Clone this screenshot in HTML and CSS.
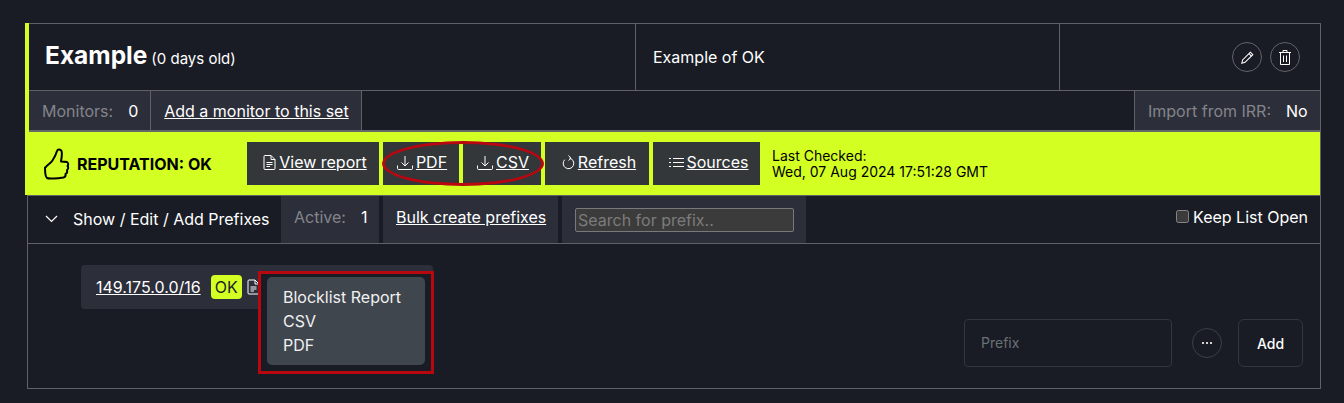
FILE: index.html
```html
<!DOCTYPE html>
<html lang="en">
<head>
    <meta charset="UTF-8">
    <meta name="viewport" content="width=device-width, initial-scale=1.0">
    <title>Example</title>
    <link rel="stylesheet" href="styles.css">
</head>
<body>
    <div class="set">
        <div class="set-head">
            <!-- Name, description, actions -->
            <div class="title-row">
                <div class="title-cell"><span class="set-name">Example</span> <span class="set-age">(0 days old)</span></div>
                <div class="desc-cell">Example of OK</div>
                <div class="actions-cell">
                    <button class="round-btn" type="button" aria-label="Edit">
                        <svg width="13" height="13" viewBox="0 0 16 16" fill="none" stroke="currentColor" stroke-width="1.300"><path d="M11.500 1.500l3 3-9.500 9.500-4 1 1-4z"/><path d="M9.800 3.200l3 3"/></svg>
                    </button>
                    <button class="round-btn" type="button" aria-label="Delete">
                        <svg width="12" height="15" viewBox="0 0 12 15" fill="none" stroke="currentColor"><path d="M0 2.500h12M4 2V.5h4V2M1.500 3v11.500h9V3M4.500 5.500v6.500M7.500 5.500v6.500"/></svg>
                    </button>
                </div>
            </div>

            <!-- Monitors -->
            <div class="info-row">
                <div class="info-cell"><span class="muted">Monitors:</span><span class="count">0</span></div>
                <div class="info-cell add-monitor"><a href="#">Add a monitor to this set</a></div>
                <div class="info-cell import-cell"><span class="muted">Import from IRR:</span><span class="count">No</span></div>
            </div>

            <!-- Reputation bar -->
            <div class="rep-bar">
                <svg class="thumb" width="26" height="32" viewBox="0 0 26 32" fill="none" stroke="#000" stroke-width="2" stroke-linejoin="round" stroke-linecap="round"><path d="M1.500 19.500c2-3 5-4 7-7 2-3 3.500-6 4.500-9.500.5-2 3.500-2 4.500 0 1 2.500 0 7-.5 10.500 2 0 4.500 0 6 .5 1.500 1 1.500 3 .5 4 1 1 1 3-.5 4 .5 1.500 0 3.500-1.500 4 .5 2-.5 3-2 3.500-3 .5-6 1-9.500 1-3 0-5 .5-7-.5-2-1.500-2-6-2-10.500z"/></svg>
                <span class="rep-label">REPUTATION: OK</span>
                <div class="rep-btns">
                    <a class="rep-btn btn-view" href="#"><svg width="13" height="15" viewBox="0 0 13 15" fill="none" stroke="currentColor"><path d="M1 1.500q0-1 1-1h6l4 4v9q0 1-1 1H2q-1 0-1-1zM8 .5v4h4M3.500 7.500h6M3.500 9.500h6M3.500 11.500h3.500"/></svg><span>View report</span></a>
                    <a class="rep-btn btn-pdf" href="#"><svg width="16" height="15" viewBox="0 0 16 15" fill="none" stroke="currentColor"><path d="M8 1v10M4.500 7.500L8 11l3.500-3.500M.5 10.500v3q0 1 1 1h13q1 0 1-1v-3"/></svg><span>PDF</span></a>
                    <a class="rep-btn btn-csv" href="#"><svg width="16" height="15" viewBox="0 0 16 15" fill="none" stroke="currentColor"><path d="M8 1v10M4.500 7.500L8 11l3.500-3.500M.5 10.500v3q0 1 1 1h13q1 0 1-1v-3"/></svg><span>CSV</span></a>
                    <a class="rep-btn btn-refresh" href="#"><svg width="13" height="15" viewBox="0 0 13 15" fill="none" stroke="currentColor"><path d="M7.500 3.200a5.300 5.300 0 1 1-4.800 1.500"/><path d="M6.500.5l2.500 2.700-2.500 2.300" stroke-width="1"/></svg><span>Refresh</span></a>
                    <a class="rep-btn btn-sources" href="#"><svg width="15" height="11" viewBox="0 0 15 11" fill="none" stroke="currentColor"><path d="M4 1.500h11M4 5.500h11M4 9.500h11M0 1.500h2M0 5.500h2M0 9.500h2"/></svg><span>Sources</span></a>
                </div>
                <div class="last-checked">Last Checked:<br>Wed, 07 Aug 2024 17:51:28 GMT</div>
                <div class="ring"></div>
            </div>
        </div>

        <!-- Prefix toolbar -->
        <div class="prefix-bar">
            <div class="toggle">
                <svg width="13" height="8" viewBox="0 0 13 8" fill="none" stroke="currentColor" stroke-width="1.200"><path d="M1 1l5.500 5.500L12 1"/></svg>
                <span>Show / Edit / Add Prefixes</span>
            </div>
            <div class="tool-cell active-cell"><span class="muted">Active:</span><span class="count">1</span></div>
            <div class="tool-cell bulk-cell"><a href="#">Bulk create prefixes</a></div>
            <div class="tool-cell search-cell"><input class="search" type="text" placeholder="Search for prefix.."></div>
            <label class="keep-open"><input type="checkbox"> Keep List Open</label>
        </div>

        <!-- Prefix list and add form -->
        <div class="prefix-body">
            <div class="chip">
                <a href="#">149.175.0.0/16</a>
                <span class="ok-tag">OK</span>
                <svg width="13" height="16" viewBox="0 0 13 15" fill="none" stroke="currentColor"><path d="M1 1.500q0-1 1-1h6l4 4v9q0 1-1 1H2q-1 0-1-1zM8 .5v4h4M3.500 7.500h6M3.500 9.500h6M3.500 11.500h3.500"/></svg>
                <div class="annot-box">
                    <ul class="menu">
                        <li>Blocklist Report</li>
                        <li>CSV</li>
                        <li>PDF</li>
                    </ul>
                </div>
            </div>
            <form class="add-form">
                <input class="prefix-input" type="text" placeholder="Prefix">
                <button class="round-btn more-btn" type="button" aria-label="More">
                    <svg width="12" height="4" viewBox="0 0 12 4" fill="currentColor"><circle cx="2" cy="2" r="1.100"/><circle cx="6" cy="2" r="1.100"/><circle cx="10" cy="2" r="1.100"/></svg>
                </button>
                <button class="add-btn" type="button">Add</button>
            </form>
        </div>
    </div>
</body>
</html>
```

FILE: styles.css
```css
/* General Styles */
body {
    margin: 0;
    background-color: #191c24;
    color: #fff;
    font-family: Inter, "Liberation Sans", sans-serif;
    font-size: 16px;
    height: 403px;
    overflow: hidden;
}
a {
    color: inherit;
}
.set {
    box-sizing: border-box;
    width: 1294px;
    height: 366px;
    margin: 23px 0 0 27px;
    border: 1px solid #5f6167;
    display: flex;
    flex-direction: column;
}
.set-head {
    margin: -1px 0 0 -3px;
    border-left: 4px solid #d4ff23;
}
.muted {
    color: #83858b;
}
.count {
    margin-left: 15px;
}

/* Title row */
.title-row {
    display: flex;
    height: 66px;
    border-top: 1px solid #5f6167;
}
.title-cell {
    box-sizing: border-box;
    width: 606px;
    padding: 16px 0 0 16px;
    display: flex;
    align-items: baseline;
    gap: 4px;
}
.set-name {
    font-size: 24.5px;
    font-weight: 700;
}
.set-age {
    font-size: 15px;
}
.desc-cell {
    box-sizing: border-box;
    width: 424px;
    padding-left: 17px;
    border-left: 1px solid #5f6167;
    display: flex;
    align-items: center;
}
.actions-cell {
    flex: 1;
    border-left: 1px solid #5f6167;
    display: flex;
    align-items: center;
    justify-content: flex-end;
    gap: 8px;
    padding-right: 20px;
}
.round-btn {
    box-sizing: border-box;
    width: 30px;
    height: 30px;
    padding: 0;
    border: 1px solid #62646a;
    border-radius: 50%;
    background: none;
    color: #fff;
    display: flex;
    align-items: center;
    justify-content: center;
}

/* Monitors row */
.info-row {
    display: flex;
    height: 39px;
    border-top: 1px solid #5f6167;
    border-bottom: 2px solid #66686c;
}
.info-cell {
    box-sizing: border-box;
    background-color: #2c2e3a;
    border-right: 1px solid #5f6167;
    padding: 0 12px 0 13px;
    display: flex;
    align-items: center;
    white-space: nowrap;
}
.import-cell {
    margin-left: auto;
    border-right: none;
    border-left: 1px solid #5f6167;
    width: 186px;
}

/* Reputation bar */
.rep-bar {
    position: relative;
    height: 63px;
    background-color: #d4ff23;
    color: #000;
    display: flex;
    align-items: center;
    padding-left: 15px;
}
.rep-label {
    font-weight: 700;
    font-size: 16px;
    margin-left: 7px;
    width: 170px;
    white-space: nowrap;
}
.rep-btns {
    display: flex;
    gap: 4px;
}
.rep-btn {
    box-sizing: border-box;
    height: 43px;
    padding: 0 0 3px 4px;
    background-color: #33373a;
    color: #fff;
    display: flex;
    align-items: center;
    justify-content: center;
    gap: 3px;
    text-decoration: none;
}
.rep-btn span {
    text-decoration: underline;
}
.btn-view { width: 132px; }
.btn-pdf { width: 76px; padding-left: 2px; }
.btn-csv { width: 78px; padding-left: 2px; }
.btn-refresh { width: 104px; }
.btn-sources { width: 107px; }
.last-checked {
    margin-left: 12px;
    font-size: 14px;
    line-height: 16px;
}
.ring {
    position: absolute;
    left: 353px;
    top: 9px;
    width: 162px;
    height: 45px;
    box-sizing: border-box;
    border: 3px solid #b9070f;
    border-radius: 50%;
}

/* Prefix toolbar */
.prefix-bar {
    display: flex;
    height: 49px;
    border-top: 1px solid #5f6167;
    border-bottom: 1px solid #5f6167;
    box-sizing: border-box;
}
.toggle {
    box-sizing: border-box;
    width: 253px;
    padding: 0 0 2px 17px;
    display: flex;
    align-items: center;
    gap: 15px;
}
.tool-cell {
    background-color: #2c2e3a;
    display: flex;
    align-items: center;
    padding-bottom: 6px;
    box-sizing: border-box;
    margin-right: 4px;
}
.active-cell {
    width: 98px;
    padding-left: 13px;
}
.bulk-cell {
    width: 175px;
    padding-left: 13px;
}
.search-cell {
    width: 244px;
    padding: 0 12px 0 13px;
}
.search {
    box-sizing: border-box;
    width: 100%;
    height: 24px;
    padding: 0 2px;
    background-color: #3b3b3b;
    border: 1px solid #77797c;
    border-radius: 2px;
    color: #fff;
    font: inherit;
}
.search::placeholder {
    color: #7b7b7b;
}
.keep-open {
    margin-left: auto;
    padding-right: 12px;
    display: flex;
    align-items: center;
    gap: 4px;
    padding-bottom: 6px;
}
.keep-open input {
    margin: 0;
    width: 13px;
    height: 13px;
    accent-color: #444;
    color-scheme: dark;
}

/* Prefix body */
.prefix-body {
    flex: 1;
    display: flex;
    justify-content: space-between;
    padding: 21px 17px 21px 53px;
}
.chip {
    position: relative;
    box-sizing: border-box;
    width: 352px;
    height: 44px;
    padding-left: 15px;
    background-color: #2c2e3a;
    border-radius: 4px;
    display: flex;
    align-items: center;
}
.ok-tag {
    box-sizing: border-box;
    width: 31px;
    height: 24px;
    margin: 0 5px 0 10px;
    background-color: #d4ff23;
    color: #1a1d25;
    border-radius: 4px;
    display: flex;
    align-items: center;
    justify-content: center;
}
.annot-box {
    position: absolute;
    left: 177px;
    top: 6px;
    box-sizing: border-box;
    width: 176px;
    height: 103px;
    border: 3px solid #b9070f;
    background-color: #191c24;
    padding: 3px 6px;
}
.menu {
    list-style: none;
    margin: 0;
    padding: 8px 16px;
    height: 88px;
    box-sizing: border-box;
    background-color: #3f464e;
    border-radius: 5px;
    line-height: 24px;
    color: #f1f1f1;
}
.add-form {
    align-self: flex-end;
    display: flex;
    align-items: center;
}
.prefix-input {
    box-sizing: border-box;
    width: 208px;
    height: 48px;
    padding: 0 16px 2px;
    background: none;
    border: 1px solid #34363c;
    border-radius: 4px;
    color: #fff;
    font: inherit;
    font-size: 14px;
}
.prefix-input::placeholder {
    color: #6b7078;
}
.more-btn {
    margin: 0 16px 0 20px;
    border-color: #3e4046;
}
.add-btn {
    box-sizing: border-box;
    width: 65px;
    height: 48px;
    background: none;
    border: 1px solid #34363c;
    border-radius: 6px;
    color: #fff;
    font: inherit;
    font-size: 14px;
    font-weight: 500;
}
```
